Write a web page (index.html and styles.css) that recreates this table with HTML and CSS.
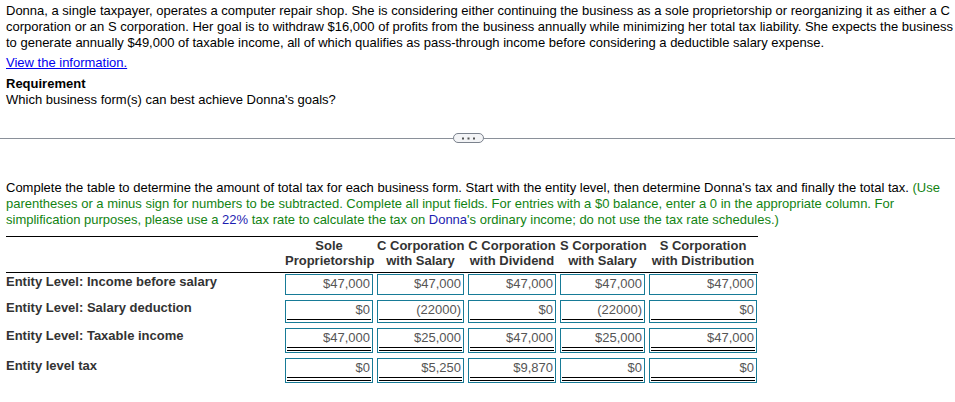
FILE: index.html
```html
<!DOCTYPE html>
<html lang="en">
<head>
<meta charset="utf-8">
<title>Business form tax comparison</title>
<link rel="stylesheet" href="styles.css">
</head>
<body>
<div class="page top">
  <p class="intro">Donna, a single taxpayer, operates a computer repair shop. She is considering either continuing the business as a sole proprietorship or reorganizing it as either a C corporation or an S corporation. Her goal is to withdraw $16,000 of profits from the business annually while minimizing her total tax liability. She expects the business to generate annually $49,000 of taxable income, all of which qualifies as pass-through income before considering a deductible salary expense.</p>
  <a class="info-link" href="#">View the information.</a>
  <div class="req">
    <div class="req-title">Requirement</div>
    <div>Which business form(s) can best achieve Donna's goals?</div>
  </div>
</div>

<div class="divider">
  <span class="rule rule-left"></span>
  <span class="pill"><svg width="13" height="3" viewBox="0 0 13 3"><rect x="0" y="0.5" width="2" height="2" fill="#555"/><rect x="5.5" y="0.5" width="2" height="2" fill="#555"/><rect x="11" y="0.5" width="2" height="2" fill="#555"/></svg></span>
  <span class="rule rule-right"></span>
</div>

<div class="page bottom">
  <p class="instructions"><span class="lead">Complete the table to determine the amount of total tax for each business form. Start with the entity level, then determine Donna's tax and finally the total tax.</span> (Use parentheses or a minus sign for numbers to be subtracted. Complete all input fields. For entries with a $0 balance, enter a 0 in the appropriate column. For simplification purposes, please use a <span class="em">22%</span> tax rate to calculate the tax on <span class="em">Donna</span>'s ordinary income; do not use the tax rate schedules.)</p>

  <div class="tax-table">
    <div class="thead trow">
      <div class="th-label"></div>
      <div class="th">Sole<br>Proprietorship</div>
      <div class="th">C Corporation<br>with Salary</div>
      <div class="th">C Corporation<br>with Dividend</div>
      <div class="th">S Corporation<br>with Salary</div>
      <div class="th">S Corporation<br>with Distribution</div>
    </div>
    <div class="tbody">
      <div class="trow">
        <div class="label">Entity Level: Income before salary</div>
        <div class="cell"><div class="val">$47,000</div></div>
        <div class="cell"><div class="val">$47,000</div></div>
        <div class="cell"><div class="val">$47,000</div></div>
        <div class="cell"><div class="val">$47,000</div></div>
        <div class="cell"><div class="val">$47,000</div></div>
      </div>
      <div class="trow">
        <div class="label">Entity Level: Salary deduction</div>
        <div class="cell single"><div class="val">$0</div></div>
        <div class="cell single"><div class="val">(22000)</div></div>
        <div class="cell single"><div class="val">$0</div></div>
        <div class="cell single"><div class="val">(22000)</div></div>
        <div class="cell single"><div class="val">$0</div></div>
      </div>
      <div class="trow">
        <div class="label">Entity Level: Taxable income</div>
        <div class="cell double"><div class="val">$47,000</div></div>
        <div class="cell double"><div class="val">$25,000</div></div>
        <div class="cell double"><div class="val">$47,000</div></div>
        <div class="cell double"><div class="val">$25,000</div></div>
        <div class="cell double"><div class="val">$47,000</div></div>
      </div>
      <div class="trow">
        <div class="label">Entity level tax</div>
        <div class="cell double"><div class="val">$0</div></div>
        <div class="cell double"><div class="val">$5,250</div></div>
        <div class="cell double"><div class="val">$9,870</div></div>
        <div class="cell double"><div class="val">$0</div></div>
        <div class="cell double"><div class="val">$0</div></div>
      </div>
    </div>
  </div>
</div>
</body>
</html>
```

FILE: styles.css
```css
html, body {
  margin: 0;
  padding: 0;
  background: #fff;
}

body {
  font-family: "Liberation Sans", Arial, sans-serif;
  font-size: 13px;
  line-height: 16px;
  color: #000;
}

.page {
  padding: 0 0 0 6px;
}

.page.top {
  padding-top: 3px;
}

.intro {
  margin: 0;
}

.info-link {
  display: block;
  width: max-content;
  margin-top: 4px;
  color: #0000ee;
  text-decoration: underline;
}

.req {
  margin-top: 5px;
}

.req-title {
  font-weight: bold;
}

.divider {
  display: flex;
  align-items: center;
  height: 10px;
  margin-top: 25px;
}

.rule {
  height: 1px;
  background: #8a9099;
}

.rule-left {
  width: 453px;
}

.rule-right {
  flex: 1;
}

.pill {
  box-sizing: border-box;
  width: 31px;
  height: 10px;
  border: 1px solid #7b828d;
  border-radius: 5px;
  background: #f3f4f6;
  display: flex;
  align-items: center;
  justify-content: center;
}

.pill svg {
  display: block;
}

.page.bottom {
  margin-top: 37px;
}

.instructions {
  margin: 0;
  color: #128312;
}

.instructions .lead {
  color: #000;
}

.instructions .em {
  color: #1d1db0;
}

.tax-table {
  margin-top: 8px;
  width: 752px;
}

.trow {
  display: grid;
  grid-template-columns: 275px 88px 87px 88px 85px 108px;
  column-gap: 4px;
  align-items: start;
}

.thead {
  border-top: 1px solid #000;
  border-bottom: 1px solid #000;
  padding: 1px 0 4px;
}

.th {
  text-align: center;
  font-weight: bold;
  line-height: 15px;
  color: #333;
  white-space: nowrap;
}

.tbody {
  display: flex;
  flex-direction: column;
  row-gap: 5px;
  margin-top: 1px;
}

.label {
  font-weight: bold;
  color: #333;
  line-height: 16px;
  white-space: nowrap;
}

.cell {
  border: 1px solid #177b97;
  padding: 1px 1px 2px;
}

.val {
  text-align: right;
  color: #555;
  line-height: 16px;
  padding-right: 1px;
}

.cell.single {
  padding-bottom: 2px;
}

.cell.single .val {
  padding-bottom: 1px;
  border-bottom: 1px solid #000;
}

.cell.double {
  padding-bottom: 1px;
}

.cell.double .val {
  padding-bottom: 1px;
  border-bottom: 4px double #000;
}
```
